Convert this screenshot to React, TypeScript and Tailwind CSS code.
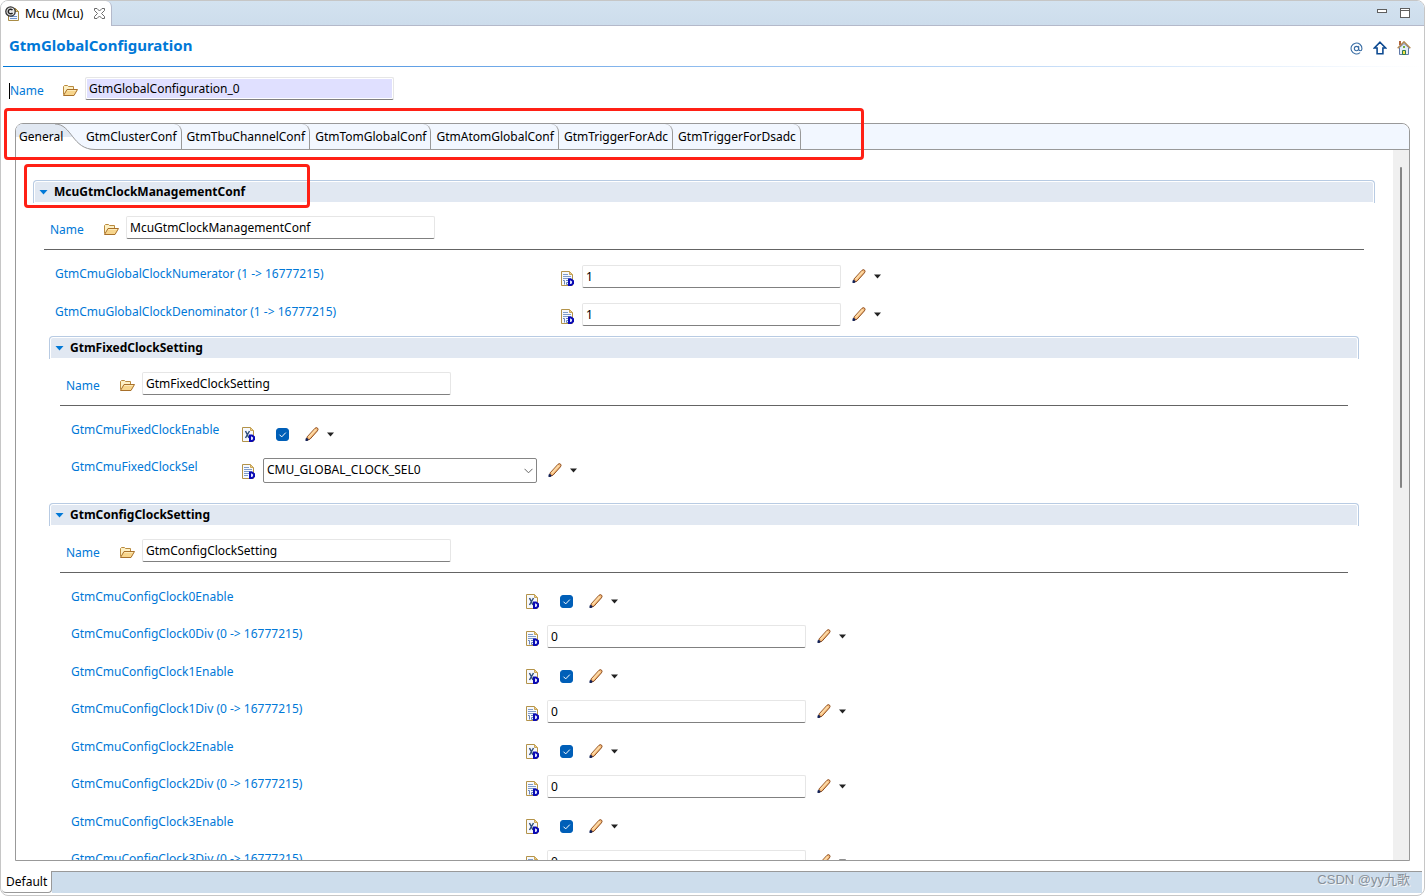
import React from 'react';
import { AtSign } from 'lucide-react';

type FieldKind = 'check' | 'number' | 'select';

interface Field {
  label: string;
  kind: FieldKind;
  value?: string;
}

const TABS = [
  'GtmClusterConf',
  'GtmTbuChannelConf',
  'GtmTomGlobalConf',
  'GtmAtomGlobalConf',
  'GtmTriggerForAdc',
  'GtmTriggerForDsadc',
];

const MANAGEMENT_FIELDS: Field[] = [
  { label: 'GtmCmuGlobalClockNumerator (1 -> 16777215)', kind: 'number', value: '1' },
  { label: 'GtmCmuGlobalClockDenominator (1 -> 16777215)', kind: 'number', value: '1' },
];

const FIXED_FIELDS: Field[] = [
  { label: 'GtmCmuFixedClockEnable', kind: 'check' },
  { label: 'GtmCmuFixedClockSel', kind: 'select', value: 'CMU_GLOBAL_CLOCK_SEL0' },
];

const CONFIG_FIELDS: Field[] = [0, 1, 2, 3].flatMap((n): Field[] => [
  { label: `GtmCmuConfigClock${n}Enable`, kind: 'check' },
  { label: `GtmCmuConfigClock${n}Div (0 -> 16777215)`, kind: 'number', value: '0' },
]);

/* ---------- Icons ---------- */

const FolderIcon = () => (
  <svg width="16" height="13" viewBox="0 0 16 13" className="shrink-0">
    <path d="M0.5 10.5V2.5L1.5 1.5H4.5L5.5 2.5H10.5V5.5" fill="#fdf0c4" stroke="#b98a3e" />
    <path d="M0.5 11.5L4 5.5H14.5L11 11.5Z" fill="#f7d58c" stroke="#a8702a" strokeLinejoin="round" />
    <path d="M4.5 6.5H13" stroke="#fdeab8" />
  </svg>
);

const PageIcon = ({ kind }: { kind: FieldKind }) => (
  <svg width="14" height="16" viewBox="0 0 14 16" className="shrink-0">
    <path d="M0.5 0.5H8.5L11.5 3.5V14.5H0.5Z" fill="#f7f9fd" stroke="#b3934a" />
    <path d="M8.5 0.5V3.5H11.5Z" fill="#e9cf8e" stroke="#c9a65a" />
    {kind === 'check' ? (
      <path d="M3.5 4L7 11M7.5 4L3.5 11" fill="none" stroke="#33507c" strokeWidth="1.5" />
    ) : (
      <path d="M2 3.5H7M2 5.5H10M2 7.5H10" stroke="#7f9cc9" />
    )}
    {kind === 'select' && <path d="M2 9.5H7M2 11.5H6" stroke="#7f9cc9" />}
    {kind === 'number' && <path d="M2 9.5H3.5V13.5M5 9.5H7.5V11.5H5.5V13.5H7" fill="none" stroke="#6a86b8" />}
    <path d="M8 8.5H10L12 10V12.5L10 14H8Z" fill="#dfe4ff" stroke="#0a0ab4" strokeWidth="2" />
  </svg>
);

const PencilIcon = () => (
  <svg width="14" height="15" viewBox="0 0 14 15">
    <path d="M2.2 9.8L10 1.3Q11.5 0 12.6 1.2Q13.6 2.4 12.4 3.9L5 12.2L1.6 13.5Z" fill="#f5b877" stroke="#8d4f22" />
    <path d="M3.6 10.4L11 2.4" stroke="#fdd9a4" strokeWidth="2" />
    <path d="M0.5 14V11.8L1.8 10.8L3.8 12.6L2.4 14Z" fill="#14245a" />
  </svg>
);

const CaretIcon = () => (
  <svg width="8" height="5" viewBox="0 0 8 5">
    <path d="M0 0.5H7L3.5 4.5Z" fill="#222" />
  </svg>
);

const EditorIcon = () => (
  <svg width="15" height="15" viewBox="0 0 15 15">
    <path d="M3.5 2.5H10.5L13.5 5.5V14.5H3.5Z" fill="#f4f8ff" stroke="#a98c45" />
    <path d="M10.5 2.5V5.5H13.5Z" fill="#e8cb83" stroke="#a98c45" />
    <path d="M5 10.5H12M5 12.5H12" stroke="#6f93cc" />
    <circle cx="5.5" cy="5.5" r="4.7" fill="#e6e6e6" stroke="#333" strokeWidth="1.3" />
    <path d="M7.5 4.2A2.3 2.3 0 1 0 7.5 6.8" fill="none" stroke="#222" strokeWidth="1.5" />
  </svg>
);

const CloseIcon = () => (
  <svg width="11" height="11" viewBox="0 0 11 11">
    <path
      d="M0.5 0.5H3L5.5 3L8 0.5H10.5V2.5L7.5 5.5L10.5 8.5V10.5H8L5.5 8L3 10.5H0.5V8.5L3.5 5.5L0.5 2.5Z"
      fill="#fff"
      stroke="#6b6b6b"
    />
  </svg>
);

const UpIcon = () => (
  <svg width="14" height="14" viewBox="0 0 14 14">
    <path d="M7 1.2L12.6 7H9.9V12.7H4.1V7H1.4Z" fill="#fff" stroke="#0d4a91" strokeWidth="1.6" />
  </svg>
);

const HomeIcon = () => (
  <svg width="14" height="16" viewBox="0 0 14 16">
    <path d="M3 1V5" stroke="#b0633a" strokeWidth="2" />
    <path d="M2.5 7.5V14.5H11.5V7.5L7 3.5Z" fill="#e3edfa" stroke="#6079a8" />
    <path d="M0.7 8.3L7 1.8L13.3 8.3" fill="none" stroke="#b28a55" strokeWidth="1.6" />
    <path d="M5.5 14.5V10.5H8.5V14.5Z" fill="#f5e34a" stroke="#2f7a52" />
    <path d="M6 6H8V8H6Z" fill="#6fae3b" />
  </svg>
);

/* ---------- Controls ---------- */

const EditButtons = ({ label }: { label: string }) => (
  <div className="flex items-center gap-2">
    <button type="button" aria-label={`Edit ${label}`}>
      <PencilIcon />
    </button>
    <button type="button" aria-label={`More options for ${label}`}>
      <CaretIcon />
    </button>
  </div>
);

const INPUT_CLASS =
  'h-[23px] border border-[#e6e6e6] border-b-[#808080] rounded-xs px-[3px] text-black outline-none shadow-[inset_0_0_0_1px_#fff]';

const FieldControl = ({ field, id }: { field: Field; id: string }) => {
  if (field.kind === 'check') {
    return (
      <div className="flex h-[27px] items-center gap-4 pl-[13px]">
        <span className="relative flex">
          <input
            id={id}
            type="checkbox"
            defaultChecked
            className="peer size-[13px] appearance-none rounded-[3px] border border-[#005fb8] checked:bg-[#005fb8]"
          />
          <svg viewBox="0 0 13 13" className="pointer-events-none absolute inset-0 hidden size-[13px] peer-checked:block">
            <path d="M3.5 6.7L5.7 8.9L9.8 4.6" fill="none" stroke="#fff" />
          </svg>
        </span>
        <EditButtons label={field.label} />
      </div>
    );
  }
  if (field.kind === 'select') {
    return (
      <div className="flex h-[25px] items-center gap-[11px]">
        <span className="relative flex">
          <select
            id={id}
            className="h-[25px] w-[274px] appearance-none rounded-xs border border-[#858585] bg-white pb-[2px] pl-[3px] text-black"
          >
            <option>{field.value}</option>
          </select>
          <svg viewBox="0 0 9 6" className="pointer-events-none absolute top-[10px] right-1 h-[6px] w-[9px]">
            <path d="M0.5 0.8L4.5 4.8L8.5 0.8" fill="none" stroke="#666" />
          </svg>
        </span>
        <EditButtons label={field.label} />
      </div>
    );
  }
  return (
    <div className="flex h-[23px] items-center gap-[11px]">
      <input id={id} type="text" defaultValue={field.value} className={`${INPUT_CLASS} w-[259px]`} />
      <EditButtons label={field.label} />
    </div>
  );
};

const ROW_HEIGHT: Record<FieldKind, string> = {
  check: 'h-[27px]',
  number: 'h-[28px]',
  select: 'h-[28px]',
};

const FieldRows = ({ fields, labelClass }: { fields: Field[]; labelClass: string }) => (
  <div className="mt-[15px] flex flex-col gap-[10px] pl-[22px]">
    {fields.map((field) => {
      const id = field.label.split(' ')[0];
      return (
        <div key={id} className={`flex items-start ${ROW_HEIGHT[field.kind]}`}>
          <label htmlFor={id} className={`shrink-0 whitespace-nowrap leading-[18px] text-[#0078d7] ${labelClass}`}>
            {field.label}
          </label>
          <div className="flex h-[27px] w-[21px] shrink-0 items-center">
            <PageIcon kind={field.kind} />
          </div>
          <FieldControl field={field} id={id} />
        </div>
      );
    })}
  </div>
);

interface SectionProps {
  title: string;
  className?: string;
  children: React.ReactNode;
}

const Section: React.FC<SectionProps> = ({ title, className = '', children }) => (
  <section className={className}>
    <h2 className="h-[23px] rounded-t-sm border border-b-0 border-[#b8cbe3] bg-[#e1e8f2] shadow-[inset_0_0_0_1px_#fff]">
      <button type="button" className="flex h-full w-full items-center gap-[6px] pl-[5px] font-bold text-black">
        <svg width="9" height="5" viewBox="0 0 9 5">
          <path d="M0.5 0H8.5L4.5 4.5Z" fill="#0078d7" />
        </svg>
        {title}
      </button>
    </h2>
    <div className="mt-[13px] flex items-start pl-[17px]">
      <label htmlFor={`name-${title}`} className="w-[54px] leading-[27px] text-[#0078d7]">
        Name
      </label>
      <div className="flex h-[27px] w-[22px] items-center">
        <FolderIcon />
      </div>
      <input id={`name-${title}`} type="text" defaultValue={title} className={`${INPUT_CLASS} w-[309px]`} />
    </div>
    <hr className="mx-[11px] mt-[6px] border-[#646464]" />
    {children}
  </section>
);

const TabStrip = () => (
  <div role="tablist" className="relative flex h-[26px] rounded-t-lg border-b border-[#999] bg-[#f2f7ff]">
    <svg width="79" height="26" viewBox="0 0 79 26" className="absolute top-0 left-0">
      <defs>
        <linearGradient id="selected-tab" x1="0" y1="0" x2="0" y2="1">
          <stop offset="0" stopColor="#e1e8f2" />
          <stop offset="0.5" stopColor="#e1e8f2" />
          <stop offset="0.5" stopColor="#fff" />
        </linearGradient>
      </defs>
      <path d="M0 26V7Q0 0 7 0H39C56 0 56 25.5 78 25.5V26Z" fill="url(#selected-tab)" />
      <path d="M39 0C56 0 56 25.5 79 25.5" fill="none" stroke="#999" />
    </svg>
    <button type="button" role="tab" aria-selected="true" className="relative w-[65px] pl-[3px] text-left">
      General
    </button>
    {TABS.map((tab) => (
      <button
        key={tab}
        type="button"
        role="tab"
        aria-selected="false"
        className="relative rounded-tr-lg border-r border-[#999] pr-1 pl-[5px]"
      >
        {tab}
      </button>
    ))}
  </div>
);

const App: React.FC = () => (
  <div className="relative flex h-screen flex-col overflow-hidden rounded-lg border border-[#c6c6c6] bg-white font-['Noto_Sans','Noto_Sans_CJK_SC',sans-serif] text-xs text-black">
    {/* Editor tab bar */}
    <div className="flex h-[25px] shrink-0 items-stretch border-b border-[#b4b9ca] bg-linear-to-b from-[#d3e2f0] to-[#cdddec]">
      <div className="-mb-px flex items-center gap-[5px] rounded-tr-md border-r border-[#b4b9ca] bg-white pr-[6px] pl-1">
        <EditorIcon />
        <span className="w-16 whitespace-nowrap">Mcu (Mcu)</span>
        <button type="button" aria-label="Close editor">
          <CloseIcon />
        </button>
      </div>
      <div className="ml-auto flex items-center gap-[13px] pr-[14px]">
        <button type="button" aria-label="Minimize" className="mb-1 h-1 w-[10px] border border-[#5f5f5f] bg-white" />
        <button type="button" aria-label="Maximize" className="size-[10px] border border-t-3 border-double border-[#5f5f5f] bg-white" />
      </div>
    </div>

    {/* Page heading */}
    <header className="flex h-10 shrink-0 items-center justify-between pr-[13px] pl-2">
      <h1 className="pb-[2px] text-[15px] font-bold text-[#0078d7]">GtmGlobalConfiguration</h1>
      <div className="flex items-center gap-[10px] pt-1">
        <button type="button" aria-label="Link">
          <AtSign size={13} strokeWidth={2} color="#3a6ea5" />
        </button>
        <button type="button" aria-label="Up">
          <UpIcon />
        </button>
        <button type="button" aria-label="Home">
          <HomeIcon />
        </button>
      </div>
    </header>
    <div className="mx-[2px] h-px shrink-0 bg-linear-to-r from-[#0078d7] to-white" />

    {/* Container name */}
    <div className="mt-[10px] flex shrink-0 items-start pl-2">
      <label htmlFor="container-name" className="flex h-[27px] w-[54px] items-center text-[#0078d7]">
        <span className="border-l border-black leading-4">Name</span>
      </label>
      <div className="flex h-[27px] w-[22px] items-center">
        <FolderIcon />
      </div>
      <input
        id="container-name"
        type="text"
        defaultValue="GtmGlobalConfiguration_0"
        className={`${INPUT_CLASS} w-[309px] bg-[#e0e0ff]`}
      />
    </div>

    {/* Tab folder */}
    <div className="relative mx-[14px] mt-[19px] mb-[10px] flex min-h-0 flex-1 flex-col rounded-t-lg border border-[#999]">
      <TabStrip />
      <div className="flex min-h-0 flex-1">
        <main className="min-w-0 flex-1 overflow-hidden pt-[30px] pr-[18px] pl-[17px]">
          <Section title="McuGtmClockManagementConf">
            <FieldRows fields={MANAGEMENT_FIELDS} labelClass="w-[506px]" />
            <div className="px-4">
              <Section title="GtmFixedClockSetting" className="mt-[5px]">
                <FieldRows fields={FIXED_FIELDS} labelClass="w-[171px]" />
              </Section>
              <Section title="GtmConfigClockSetting" className="mt-[17px]">
                <FieldRows fields={CONFIG_FIELDS} labelClass="w-[455px]" />
              </Section>
            </div>
          </Section>
        </main>
        <div className="flex w-4 justify-center bg-[#f0f0f0] pt-[17px]">
          <div className="h-[321px] w-[2px] rounded-full bg-[#858585]" />
        </div>
      </div>

      {/* Highlight frames */}
      <div className="pointer-events-none absolute -top-4 -left-3 h-[52px] w-[860px] rounded-sm border-3 border-[#ff2015]" />
      <div className="pointer-events-none absolute top-10 left-2 h-[44px] w-[286px] rounded-sm border-3 border-[#ff2015]" />
    </div>

    {/* Page selector */}
    <div className="mb-[2px] flex h-[22px] shrink-0 pr-[2px] pl-px">
      <button type="button" className="rounded-b-sm border-r border-b border-[#999] bg-white px-1">
        Default
      </button>
      <div className="flex-1 border-t border-[#999] bg-[#cdddec]" />
    </div>

    <div className="pointer-events-none absolute right-[14px] bottom-[7px] font-['Liberation_Sans','Noto_Sans_CJK_SC',sans-serif] text-[13px] text-[#87909a] [text-shadow:1px_1px_0_#f4f4f4]">
      CSDN @yy九歌
    </div>
  </div>
);

export default App;
